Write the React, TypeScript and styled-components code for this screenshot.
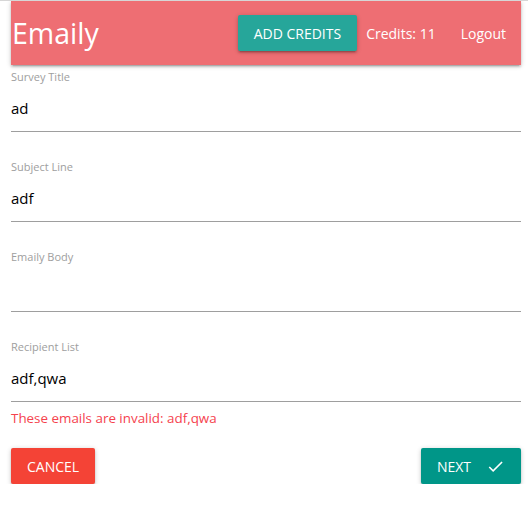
import React from "react";
import styled, { createGlobalStyle } from "styled-components";

const Global = createGlobalStyle`
  html, body { margin: 0; padding: 0; background: #fff; }
  body {
    font-family: "Open Sans", "Noto Sans", sans-serif;
    font-size: 15px;
    color: rgba(0,0,0,0.87);
    border-top: 1px solid #d6d6d6;
  }
`;

const Page = styled.div`
  width: 510px;
  margin-left: 11px;
`;

const Nav = styled.nav`
  height: 64px;
  background: #ee6e73;
  display: flex;
  align-items: center;
  box-shadow: 0 2px 2px 0 rgba(0,0,0,0.14), 0 3px 1px -2px rgba(0,0,0,0.12), 0 1px 5px 0 rgba(0,0,0,0.2);
  color: #fff;
`;

const Brand = styled.a`
  font-size: 28.5px;
  color: #fff;
  padding-left: 1px;
  margin-right: auto;
  line-height: 64px;
`;

const RaisedButton = styled.button<{ $bg: string }>`
  height: 36px;
  padding: 0 16px;
  border: none;
  border-radius: 2px;
  background: ${(p) => p.$bg};
  color: #fff;
  font-family: inherit;
  font-size: 14px;
  text-transform: uppercase;
  display: inline-flex;
  align-items: center;
  box-shadow: 0 2px 2px 0 rgba(0,0,0,0.14), 0 3px 1px -2px rgba(0,0,0,0.12), 0 1px 5px 0 rgba(0,0,0,0.2);
  cursor: pointer;
`;

const NavItem = styled.span<{ $pl: number; $pr: number }>`
  font-size: 14px;
  padding-left: ${(p) => p.$pl}px;
  padding-right: ${(p) => p.$pr}px;
`;

const Form = styled.form`
  display: flex;
  flex-direction: column;
  padding-top: 4px;
`;

const Field = styled.div<{ $mb: number }>`
  display: flex;
  flex-direction: column;
  margin-bottom: ${(p) => p.$mb}px;
`;

const Label = styled.label`
  font-size: 11px;
  line-height: 16px;
  color: #9e9e9e;
`;

const Input = styled.div`
  height: 46px;
  border-bottom: 1px solid #9e9e9e;
  font-size: 15px;
  line-height: 47px;
  color: #000;
`;

const Error = styled.div`
  color: #f5424e;
  font-size: 13.4px;
  line-height: 20px;
  padding-top: 6px;
`;

const Actions = styled.div`
  display: flex;
  justify-content: space-between;
  margin-top: 20px;
`;

const CheckIcon = styled.svg`
  width: 19px;
  height: 19px;
  margin-left: 15px;
  fill: #fff;
`;

export default function App() {
  return (
    <>
      <Global />
      <Page>
        <Nav>
          <Brand>Emaily</Brand>
          <RaisedButton $bg="#26a69a">Add Credits</RaisedButton>
          <NavItem $pl={9} $pr={25}>Credits: 11</NavItem>
          <NavItem $pl={0} $pr={15}>Logout</NavItem>
        </Nav>
        <Form>
          <Field $mb={27}>
            <Label>Survey Title</Label>
            <Input>ad</Input>
          </Field>
          <Field $mb={27}>
            <Label>Subject Line</Label>
            <Input>adf</Input>
          </Field>
          <Field $mb={27}>
            <Label>Emaily Body</Label>
            <Input></Input>
          </Field>
          <Field $mb={0}>
            <Label>Recipient List</Label>
            <Input>adf,qwa</Input>
            <Error>These emails are invalid: adf,qwa</Error>
          </Field>
          <Actions>
            <RaisedButton $bg="#f44336" type="button">Cancel</RaisedButton>
            <RaisedButton $bg="#009688" type="submit">
              Next
              <CheckIcon viewBox="0 0 24 24">
                <path d="M9 16.17L4.83 12l-1.42 1.41L9 19 21 7l-1.41-1.41z" />
              </CheckIcon>
            </RaisedButton>
          </Actions>
        </Form>
      </Page>
    </>
  );
}
